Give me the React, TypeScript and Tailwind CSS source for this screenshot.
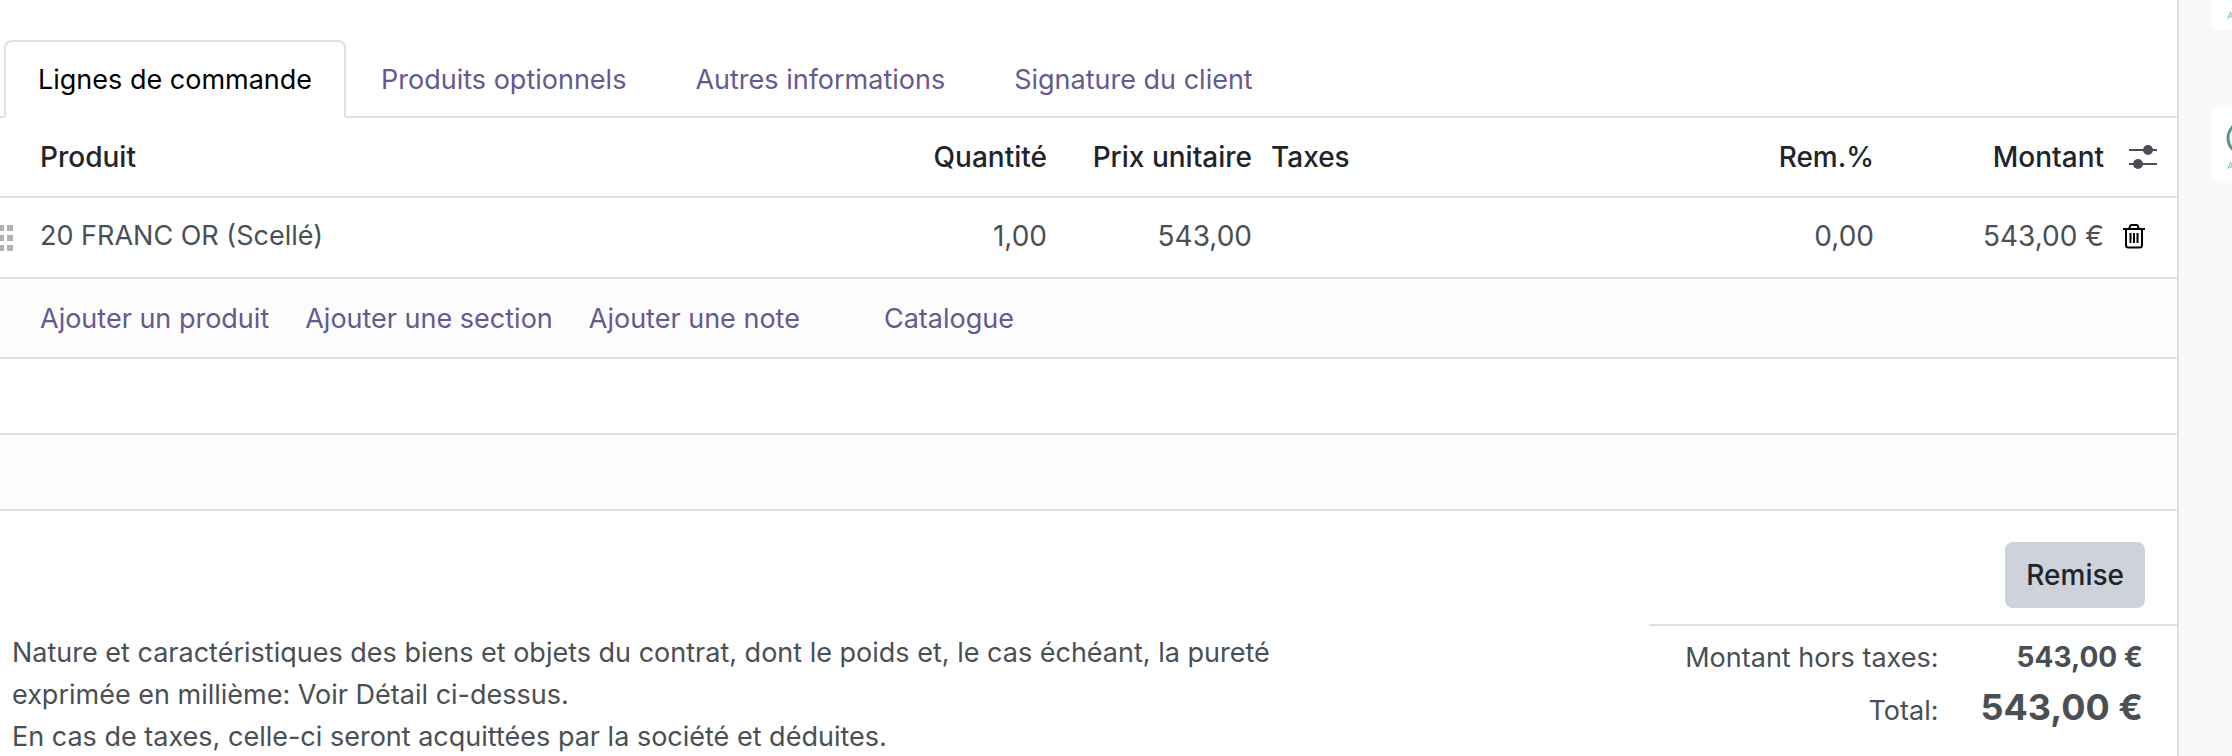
import { useState } from "react"

const TABS = [
  { id: "lignes", nome: "Lignes de commande" },
  { id: "options", nome: "Produits optionnels" },
  { id: "infos", nome: "Autres informations" },
  { id: "signature", nome: "Signature du client" },
]

const LIGNES = [
  {
    id: 1,
    produit: "20 FRANC OR (Scellé)",
    quantite: 1,
    prix: 543,
    taxes: "",
    remise: 0,
  },
]

const formatNombre = (v: number) =>
  v.toLocaleString("fr-FR", { minimumFractionDigits: 2 })

function Poignee() {
  return (
    <svg width="13" height="26" viewBox="0 0 13 26" fill="#b0b1b4">
      {[0, 10, 20].map((y) => (
        <g key={y}>
          <rect x="-2" y={y} width="6" height="6" />
          <rect x="7" y={y} width="6" height="6" />
        </g>
      ))}
    </svg>
  )
}

function IconeReglages() {
  return (
    <svg width="28" height="26" viewBox="0 0 28 26" fill="#4a4f55">
      <rect x="0" y="5" width="28" height="2" />
      <rect x="0" y="19" width="28" height="2" />
      <circle cx="19" cy="6" r="5" />
      <circle cx="9" cy="20" r="5" />
    </svg>
  )
}

function IconePoubelle() {
  return (
    <svg width="22" height="26" viewBox="0 0 22 26" fill="none" stroke="#000" strokeWidth="2">
      <path d="M0 6H22" />
      <path d="M6 6L7.2 2.8Q7.6 2 8.6 2H13.4Q14.4 2 14.8 2.8L16 6" />
      <path d="M3 6V22Q3 24.5 5.2 24.5H16.8Q19 24.5 19 22V6" />
      <path d="M7.5 10V20M11 10V20M14.5 10V20" />
    </svg>
  )
}

// vignette coupée par le bord droit
function Vignette({ className }: { className: string }) {
  return (
    <div className={`ml-[33px] h-18 bg-white ${className}`}>
      <svg className="block" width="20" height="72" viewBox="0 0 20 72" fill="none">
        <circle cx="32" cy="30" r="16" stroke="#5d9482" strokeWidth="3" />
        <path d="M16 61L18.5 54L21 61M17 59H20" stroke="#8fb5a8" strokeWidth="1" />
      </svg>
    </div>
  )
}

export default function App() {
  const [onglet, setOnglet] = useState("lignes")

  const total = LIGNES.reduce((s, l) => s + l.quantite * l.prix, 0)

  return (
    <div className="flex h-screen overflow-hidden bg-white font-['Inter',sans-serif] text-[27px] leading-[42px] text-[#4a4f54]">
      <main className="flex min-w-0 flex-1 flex-col border-r-2 border-[#dee0e2] pt-10">
        {/* ONGLETS */}
        <div role="tablist" className="flex gap-px border-b-2 border-[#dee0e2] pl-1">
          {TABS.map((t) => (
            <button
              key={t.id}
              role="tab"
              aria-selected={onglet === t.id}
              onClick={() => setOnglet(t.id)}
              className={
                onglet === t.id
                  ? "-mb-0.5 rounded-t-lg border-2 border-[#dee0e2] border-b-white bg-white px-8 pt-[17px] pb-[15px] text-black"
                  : "-mb-0.5 border-2 border-transparent px-8 pt-[17px] pb-[15px] text-[#66598f]"
              }
            >
              {t.nome}
            </button>
          ))}
        </div>

        {/* LIGNES */}
        <table className="w-full table-fixed">
          <colgroup>
            <col className="w-[30px]" />
            <col />
            <col className="w-[150px]" />
            <col className="w-[205px]" />
            <col className="w-[460px]" />
            <col className="w-[162px]" />
            <col className="w-[230px]" />
            <col className="w-16" />
          </colgroup>
          <thead>
            <tr className="h-[79px] border-b-2 border-[#dee0e2] text-[28px] text-[#212529]">
              <th />
              <th className="px-2.5 text-left font-medium">Produit</th>
              <th className="pr-[9px] text-right font-medium">Quantité</th>
              <th className="pr-[9px] text-right font-medium whitespace-nowrap">Prix unitaire</th>
              <th className="px-2.5 text-left font-medium">Taxes</th>
              <th className="pr-[9px] text-right font-medium">Rem.%</th>
              <th className="pr-[9px] text-right font-medium">Montant</th>
              <th>
                <button aria-label="Colonnes" className="ml-1 block px-3">
                  <IconeReglages />
                </button>
              </th>
            </tr>
          </thead>
          <tbody>
            {LIGNES.map((l) => (
              <tr key={l.id} className="h-[81px] border-b-2 border-[#dee0e2]">
                <td>
                  <Poignee />
                </td>
                <td className="px-2.5 pb-1">{l.produit}</td>
                <td className="pr-[9px] pb-1 text-right text-[28px]">{formatNombre(l.quantite)}</td>
                <td className="pr-[9px] pb-1 text-right text-[28px]">{formatNombre(l.prix)}</td>
                <td className="px-2.5 pb-1">{l.taxes}</td>
                <td className="pr-[9px] pb-1 text-right text-[28px]">{formatNombre(l.remise)}</td>
                <td className="pr-[9px] pb-1 text-right text-[28px]">
                  {formatNombre(l.quantite * l.prix)} €
                </td>
                <td className="pb-1">
                  <button aria-label="Supprimer" className="block px-2.5">
                    <IconePoubelle />
                  </button>
                </td>
              </tr>
            ))}
            <tr className="h-20 border-b-2 border-[#dee0e2] bg-[#fcfcfd]">
              <td />
              <td colSpan={7} className="px-2.5 pt-0.5">
                <div className="flex gap-9 text-[#66598f]">
                  <a href="#produit">Ajouter un produit</a>
                  <a href="#section">Ajouter une section</a>
                  <a href="#note">Ajouter une note</a>
                  <a href="#catalogue" className="ml-12">Catalogue</a>
                </div>
              </td>
            </tr>
            <tr className="h-19 border-b-2 border-[#dee0e2]">
              <td colSpan={8} />
            </tr>
            <tr className="h-19 border-b-2 border-[#dee0e2] bg-[#fcfcfd]">
              <td colSpan={8} />
            </tr>
          </tbody>
        </table>

        <div className="flex justify-end px-8 pt-[31px] pb-4">
          <button className="rounded-lg bg-[#ced2da] px-[21px] py-3 text-[28px] font-medium text-[#212529]">
            Remise
          </button>
        </div>

        {/* NOTES + TOTAUX */}
        <div className="flex justify-between">
          <div className="w-[1320px] pt-2 pl-3">
            <p>
              Nature et caractéristiques des biens et objets du contrat, dont le poids et, le cas échéant, la pureté
              <br />
              exprimée en millième: Voir Détail ci-dessus.
            </p>
            <p>En cas de taxes, celle-ci seront acquittées par la société et déduites.</p>
          </div>
          <dl className="grid w-[528px] grid-cols-[1fr_auto] content-start items-baseline gap-x-[42px] border-t-2 border-[#dee0e2] pt-2.5 pr-8.5 text-right">
            <dt>Montant hors taxes:</dt>
            <dd className="text-[28px] font-bold">{formatNombre(total)} €</dd>
            <dt>Total:</dt>
            <dd className="text-4xl leading-[56px] font-bold">{formatNombre(total)} €</dd>
          </dl>
        </div>
      </main>

      <aside className="w-[53px] shrink-0 overflow-hidden bg-[#f8f9fb]">
        <Vignette className="-mt-[42px]" />
        <Vignette className="mt-[78px]" />
      </aside>
    </div>
  )
}
